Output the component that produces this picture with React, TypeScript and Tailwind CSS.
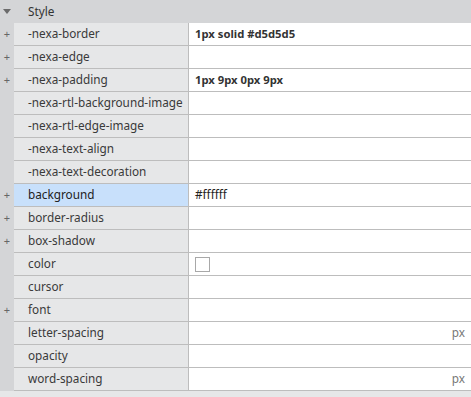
import React from "react";

interface StyleRow {
    name: string;
    value?: string;
    expandable?: boolean;
    selected?: boolean;
    swatch?: boolean;
    unit?: string;
    bold?: boolean;
}

const rows: StyleRow[] = [
    { name: "-nexa-border", value: "1px solid #d5d5d5", expandable: true, bold: true },
    { name: "-nexa-edge", expandable: true },
    { name: "-nexa-padding", value: "1px 9px 0px 9px", expandable: true, bold: true },
    { name: "-nexa-rtl-background-image" },
    { name: "-nexa-rtl-edge-image" },
    { name: "-nexa-text-align" },
    { name: "-nexa-text-decoration" },
    { name: "background", value: "#ffffff", expandable: true, selected: true },
    { name: "border-radius", expandable: true },
    { name: "box-shadow", expandable: true },
    { name: "color", swatch: true },
    { name: "cursor" },
    { name: "font", expandable: true },
    { name: "letter-spacing", unit: "px" },
    { name: "opacity" },
    { name: "word-spacing", unit: "px" },
];

const App = () => {
    return (
        <div
            className="w-[471px] h-[397px] bg-[#e6e7e8] text-[11.75px] text-[#3a3a3a] overflow-hidden"
            style={{ fontFamily: '"Noto Sans", "Open Sans", sans-serif' }}
        >
            <div className="h-[23px] bg-[#d4d5d7] flex items-center">
                <div className="w-[14px] flex justify-center">
                    <svg width="8" height="5" viewBox="0 0 8 5">
                        <path d="M0 0 L8 0 L4 5 Z" fill="#6b6b6b" />
                    </svg>
                </div>
                <span className="pl-[14px] text-[#333]">Style</span>
            </div>

            <div className="flex">
                <div className="w-[14px] bg-[#d4d5d7] shrink-0">
                    {rows.map((row) => (
                        <div key={row.name} className="h-[23px] flex items-center justify-center text-[#666] text-[11px]">
                            {row.expandable ? "+" : ""}
                        </div>
                    ))}
                </div>
                <div className="flex-1">
                    {rows.map((row) => (
                        <div key={row.name} className="h-[23px] flex border-b border-[#bdbdbd]">
                            <div
                                className={`w-[175px] shrink-0 flex items-center pl-[14px] border-r border-[#bdbdbd] ${
                                    row.selected ? "bg-[#c8e0fb] text-[#222]" : "bg-[#e6e7e8]"
                                }`}
                            >
                                {row.name}
                            </div>
                            <div className="flex-1 bg-white flex items-center pl-[6px] pr-[6px]">
                                {row.value && (
                                    <span className={row.bold ? "font-bold text-[11.25px] text-[#333]" : "text-[#222]"}>
                                        {row.value}
                                    </span>
                                )}
                                {row.swatch && (
                                    <div className="w-[15px] h-[15px] border border-[#a8a8a8] bg-white" />
                                )}
                                {row.unit && <span className="ml-auto text-[#777]">{row.unit}</span>}
                            </div>
                        </div>
                    ))}
                </div>
            </div>
        </div>
    );
};

export default App;
